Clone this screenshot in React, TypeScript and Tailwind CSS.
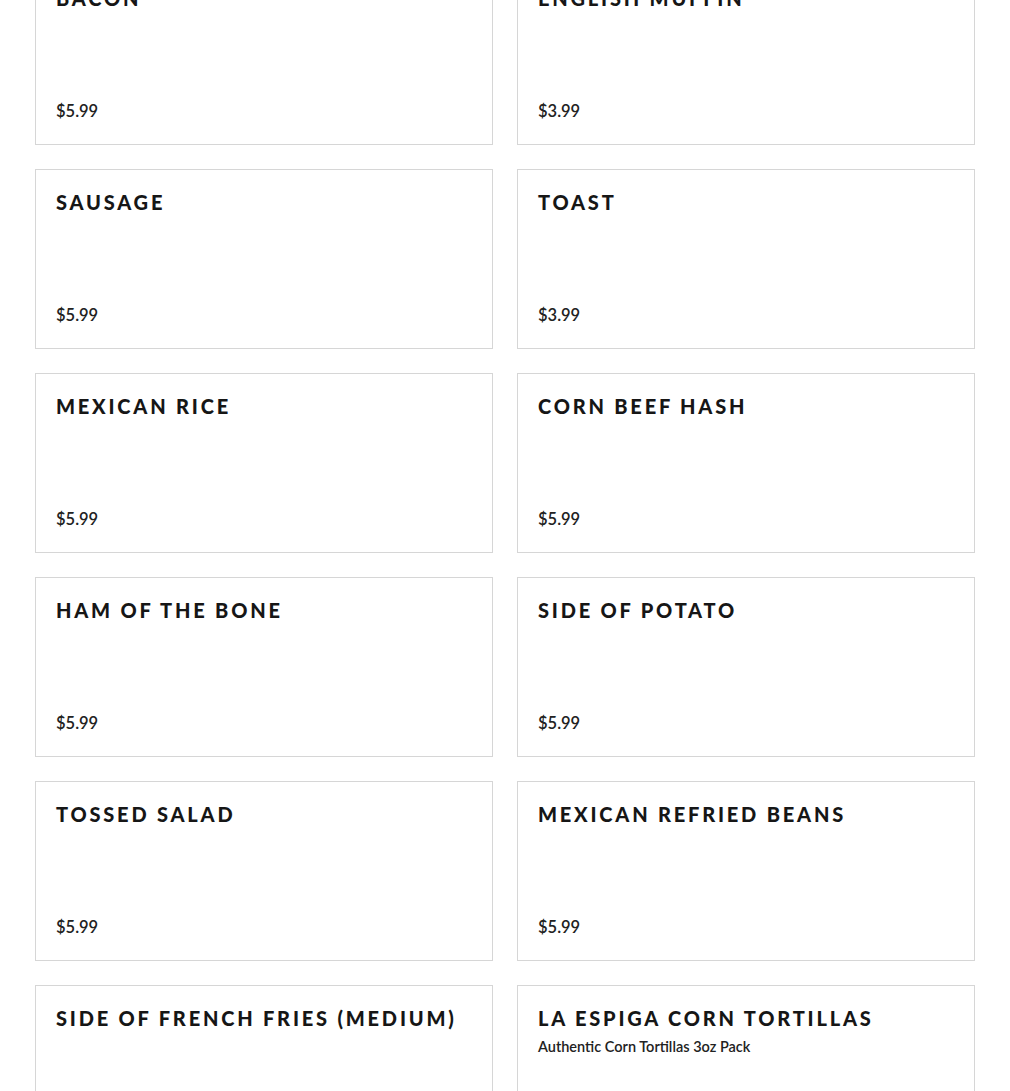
import React from "react";

type Item = { name: string; price: string; desc?: string };

const items: Item[] = [
  { name: "Bacon", price: "$5.99" },
  { name: "English Muffin", price: "$3.99" },
  { name: "Sausage", price: "$5.99" },
  { name: "Toast", price: "$3.99" },
  { name: "Mexican Rice", price: "$5.99" },
  { name: "Corn Beef Hash", price: "$5.99" },
  { name: "Ham of the Bone", price: "$5.99" },
  { name: "Side of Potato", price: "$5.99" },
  { name: "Tossed Salad", price: "$5.99" },
  { name: "Mexican Refried Beans", price: "$5.99" },
  { name: "Side of French Fries (Medium)", price: "$5.99" },
  { name: "La Espiga Corn Tortillas", price: "$2.99", desc: "Authentic Corn Tortillas 3oz Pack" },
];

export default function App() {
  return (
    <div className="bg-white w-full min-h-[1091px] overflow-hidden">
      <div className="px-[35px] -mt-[35px] grid grid-cols-2 gap-x-6 gap-y-6">
        {items.map((it) => (
          <div
            key={it.name}
            className="h-[180px] border border-[#d6d6d6] px-5 pt-[20px] pb-[23px] flex flex-col justify-between"
          >
            <div>
              <div
                className="uppercase text-[#161616] text-[20px] leading-[24px] tracking-[0.14em] whitespace-nowrap"
                style={{ fontFamily: "Lato, 'Liberation Sans', sans-serif", fontWeight: 900 }}
              >
                {it.name}
              </div>
              {it.desc && (
                <div
                  className="mt-[8px] text-[14.5px] leading-[18px] text-[#222] font-semibold"
                  style={{ fontFamily: "Lato, 'Liberation Sans', sans-serif" }}
                >
                  {it.desc}
                </div>
              )}
            </div>
            <div
              className="text-[16.5px] leading-[20px] text-[#222] font-semibold"
              style={{ fontFamily: "Lato, 'Liberation Sans', sans-serif" }}
            >
              {it.price}
            </div>
          </div>
        ))}
      </div>
    </div>
  );
}
